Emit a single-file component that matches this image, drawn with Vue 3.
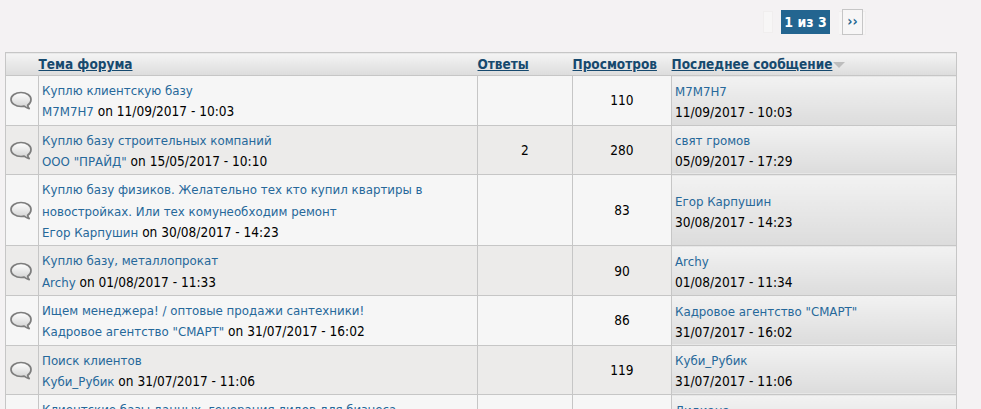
<script setup>
const rows = [
  { title: ['Куплю клиентскую базу'], author: 'M7M7H7', date: '11/09/2017 - 10:03', replies: '', views: '110', last: 'M7M7H7', lastDate: '11/09/2017 - 10:03' },
  { title: ['Куплю базу строительных компаний'], author: 'ООО "ПРАЙД"', date: '15/05/2017 - 10:10', replies: '2', views: '280', last: 'свят громов', lastDate: '05/09/2017 - 17:29' },
  { title: ['Куплю базу физиков. Желательно тех кто купил квартиры в', 'новостройках. Или тех комунеобходим ремонт'], author: 'Егор Карпушин', date: '30/08/2017 - 14:23', replies: '', views: '83', last: 'Егор Карпушин', lastDate: '30/08/2017 - 14:23' },
  { title: ['Куплю базу, металлопрокат'], author: 'Archy', date: '01/08/2017 - 11:33', replies: '', views: '90', last: 'Archy', lastDate: '01/08/2017 - 11:34' },
  { title: ['Ищем менеджера! / оптовые продажи сантехники!'], author: 'Кадровое агентство "СМАРТ"', date: '31/07/2017 - 16:02', replies: '', views: '86', last: 'Кадровое агентство "СМАРТ"', lastDate: '31/07/2017 - 16:02' },
  { title: ['Поиск клиентов'], author: 'Куби_Рубик', date: '31/07/2017 - 11:06', replies: '', views: '119', last: 'Куби_Рубик', lastDate: '31/07/2017 - 11:06' },
  { title: ['Клиентские базы данных, генерация лидов для бизнеса'], author: 'Лидиана', date: '28/07/2017 - 12:00', replies: '', views: '95', last: 'Лидиана', lastDate: '28/07/2017 - 12:00' },
]
</script>

<template>
  <div class="page">
    <div class="pager">
      <span class="ghost"></span>
      <span class="current">1 из 3</span>
      <span class="next-wrap"><a class="next">››</a></span>
    </div>
    <table class="topics">
      <colgroup>
        <col class="c-icon" /><col class="c-title" /><col class="c-replies" /><col class="c-views" /><col class="c-last" />
      </colgroup>
      <thead>
        <tr>
          <th></th>
          <th><a>Тема форума</a></th>
          <th><a>Ответы</a></th>
          <th><a>Просмотров</a></th>
          <th><a>Последнее сообщение</a><i class="sort"></i></th>
        </tr>
      </thead>
      <tbody>
        <tr v-for="(r, i) in rows" :key="i" :class="{ alt: i % 2 === 1 }">
          <td class="icon">
            <svg width="22" height="20" viewBox="0 0 22 20">
              <defs>
                <linearGradient id="bub" x1="0" y1="0" x2="0" y2="1">
                  <stop offset="0" stop-color="#ffffff" />
                  <stop offset="1" stop-color="#cfcfcf" />
                </linearGradient>
              </defs>
              <path d="M11 1.500C5.500 1.500 1 4.500 1 8.500c0 3.800 4.500 7 10 7 1 0 2.200-.1 3.200-.4 1.300 1.100 3 2 5 2.500-.8-1-1.300-2-1.500-3.300 2-1.400 3.300-3.400 3.300-5.800 0-4-4.500-7-10-7z" fill="url(#bub)" stroke="#7d7d7d" stroke-width="1.700" stroke-linejoin="round" />
            </svg>
          </td>
          <td class="title">
            <div v-for="(t, j) in r.title" :key="j" class="ln"><a>{{ t }}</a></div>
            <div class="ln"><a>{{ r.author }}</a> on {{ r.date }}</div>
          </td>
          <td class="num">{{ r.replies }}</td>
          <td class="num">{{ r.views }}</td>
          <td class="last">
            <div class="ln2"><a>{{ r.last }}</a></div>
            <div class="ln2">{{ r.lastDate }}</div>
          </td>
        </tr>
      </tbody>
    </table>
  </div>
</template>

<style scoped>
.page {
  height: 409px;
  overflow: hidden;
  background: #f4f2f3;
  padding: 0 0 0 5px;
  box-sizing: border-box;
  font-family: "DejaVu Sans Condensed", "Noto Sans", sans-serif;
  font-size: 13.55px;
  color: #000;
}
.pager {
  display: flex;
  align-items: flex-start;
  height: 52px;
  padding: 9px 0 0 758px;
  box-sizing: border-box;
}
.ghost {
  width: 8px;
  height: 20px;
  margin: 2px 8px 0 0;
  border: 1px solid #f0eeee;
  background: #f7f6f6;
}
.current {
  width: 49px;
  height: 24px;
  margin-top: 1px;
  background: #236590;
  color: #fff;
  font-weight: 700;
  font-size: 14px;
  line-height: 24px;
  text-align: center;
}
.next-wrap {
  display: block;
  margin-left: 9px;
  padding: 0 2px 0 3px;
  height: 24px;
  margin-top: 2px;
  box-sizing: border-box;
  background: #f7f6f6;
  border: 1px solid #f0eeee;
  border-left: 0;
}
.next {
  display: block;
  width: 19px;
  height: 24px;
  margin-top: -3px;
  border: 1px solid #c6c6c6;
  background: #f7f6f6;
  color: #236590;
  font-weight: 700;
  font-size: 14px;
  line-height: 22px;
  text-align: center;
}
.topics {
  width: 951px;
  table-layout: fixed;
  border-collapse: collapse;
  border: 1px solid #c6c6c6;
}
.c-icon { width: 33px; }
.c-title { width: 439px; }
.c-replies { width: 95px; }
.c-views { width: 99px; }
.c-last { width: 285px; }
th {
  height: 22px;
  padding: 0;
  text-align: left;
  background: linear-gradient(#f4f4f4, #dcdcdc);
  border-bottom: 1px solid #c6c6c6;
  font-size: 13.5px;
  font-weight: 700;
  white-space: nowrap;
}
th a {
  color: #16496e;
  text-decoration: underline;
}
.sort {
  display: inline-block;
  width: 0;
  height: 0;
  margin-left: 1px;
  vertical-align: middle;
  border-style: solid;
  border-width: 6px 6px 0;
  border-color: #bdbdbd transparent transparent;
}
td {
  padding: 0;
  border: 1px solid #c6c6c6;
  background: #f6f6f6;
  vertical-align: middle;
}
td a { font-size: 13.15px; }
.alt td { background: #ecebea; }
.icon svg { display: block; margin: 2px 0 0 4px; }
.title { padding: 4px 3px 2px; line-height: 21.33px; }
.ln { white-space: nowrap; }
.num { text-align: center; }
td.last { padding: 3px 3px 1px; line-height: 20px; background: linear-gradient(#f2f2f2, #dcdcdc); }
a { color: #26689a; }
</style>

<style>
html, body { margin: 0; overflow: hidden; background: #f4f2f3; }
</style>
